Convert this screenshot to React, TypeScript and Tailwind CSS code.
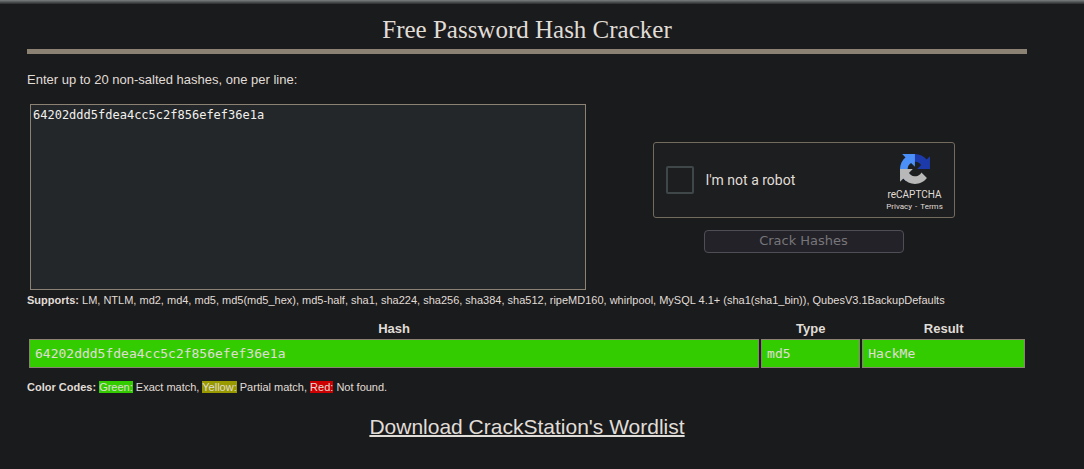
import { useState } from "react";

const SUPPORTED =
  "LM, NTLM, md2, md4, md5, md5(md5_hex), md5-half, sha1, sha224, sha256, sha384, sha512, ripeMD160, whirlpool, MySQL 4.1+ (sha1(sha1_bin)), QubesV3.1BackupDefaults";

const RESULTS = [
  { hash: "64202ddd5fdea4cc5c2f856efef36e1a", type: "md5", result: "HackMe" },
];

function RecaptchaLogo() {
  return (
    <svg viewBox="0 0 64 64" className="size-[30px]" aria-hidden="true">
      <path
        fill="#1c3aa9"
        d="M64 31.955l-.033-1.37V4.687l-7.16 7.16C50.948 4.674 42.033.093 32.05.093c-10.4 0-19.622 4.96-25.458 12.64l11.736 11.86a15.55 15.55 0 0 1 4.754-5.334c2.05-1.6 4.952-2.906 8.968-2.906.485 0 .86.057 1.135.163 4.976.393 9.288 3.14 11.828 7.124l-8.307 8.307L64 31.953"
      />
      <path
        fill="#4b8ff8"
        d="M31.862.094l-1.37.033H4.594l7.16 7.16C4.58 13.147 0 22.06 0 32.046c0 10.4 4.96 19.622 12.64 25.458L24.5 45.768a15.55 15.55 0 0 1-5.334-4.754c-1.6-2.05-2.906-4.952-2.906-8.968 0-.485.057-.86.163-1.135.393-4.976 3.14-9.288 7.124-11.828l8.307 8.307L31.86.095"
      />
      <path
        fill="#b8b8b8"
        d="M.001 32.045l.033 1.37v25.898l7.16-7.16c5.86 7.173 14.774 11.754 24.76 11.754 10.4 0 19.622-4.96 25.458-12.64l-11.736-11.86a15.55 15.55 0 0 1-4.754 5.334c-2.05 1.6-4.952 2.906-8.968 2.906-.485 0-.86-.057-1.135-.163-4.976-.393-9.288-3.14-11.828-7.124l8.307-8.307c-10.522.04-22.4.066-27.985-.005"
      />
    </svg>
  );
}

function Recaptcha() {
  return (
    <div className="flex h-[76px] w-[302px] items-center rounded-[3px] border border-[#736b5e] bg-[#1c1e1f] pl-3 font-['Roboto',sans-serif] text-[#e0ddd8]">
      <input
        id="robot"
        type="checkbox"
        className="size-7 appearance-none rounded-[2px] border-2 border-[#404748] checked:bg-[#3c0]"
      />
      <label htmlFor="robot" className="flex-1 pl-3 text-sm">
        I'm not a robot
      </label>
      <div className="flex w-[78px] flex-col items-center pt-[6px]">
        <RecaptchaLogo />
        <span className="mt-1 text-[10px] leading-[14px]">reCAPTCHA</span>
        <span className="flex gap-[3px] text-[8px] leading-[10px]">
          <a href="#privacy">Privacy</a>
          <span>-</span>
          <a href="#terms">Terms</a>
        </span>
      </div>
    </div>
  );
}

function ResultsTable() {
  return (
    <table className="w-full table-fixed border-separate border-spacing-x-[2px] border-spacing-y-0">
      <colgroup>
        <col className="w-[73.6%]" />
        <col className="w-[10%]" />
        <col />
      </colgroup>
      <thead className="leading-5">
        <tr>
          <th>Hash</th>
          <th>Type</th>
          <th>Result</th>
        </tr>
      </thead>
      <tbody className="font-['DejaVu_Sans_Mono',monospace] leading-[17px]">
        {RESULTS.map((row) => (
          <tr key={row.hash}>
            <td className="border border-[#8c8273] bg-[#3c0] px-[5px] py-[5px]">{row.hash}</td>
            <td className="border border-[#8c8273] bg-[#3c0] px-[5px] py-[5px]">{row.type}</td>
            <td className="border border-[#8c8273] bg-[#3c0] px-[5px] py-[5px]">{row.result}</td>
          </tr>
        ))}
      </tbody>
    </table>
  );
}

export default function App() {
  const [hashes, setHashes] = useState("64202ddd5fdea4cc5c2f856efef36e1a");

  return (
    <div className="min-h-screen bg-[#1a1b1c] font-['Liberation_Sans',sans-serif] text-[13px] text-[#e0ddd8]">
      <div className="h-1 bg-linear-to-b from-[#7c8080] to-[#2a2c2d]" />
      <main className="pr-[57px] pl-[27px]">
        <h1 className="border-b-5 border-[#8c8273] pt-[11px] pb-[4px] text-center font-['Liberation_Serif',serif] text-[25px] leading-[30px]">
          Free Password Hash Cracker
        </h1>

        <label htmlFor="hashes" className="block pt-4 leading-5">
          Enter up to 20 non-salted hashes, one per line:
        </label>

        <form className="flex pt-[14px] pl-[3px]" onSubmit={(e) => e.preventDefault()}>
          <textarea
            id="hashes"
            value={hashes}
            onChange={(e) => setHashes(e.target.value)}
            spellCheck={false}
            className="h-[186px] w-[556px] resize-none border border-[#8c8273] bg-[#232729] p-[2px] font-['DejaVu_Sans_Mono',monospace] text-xs leading-4 text-[#f2f0ed]"
          />
          <div className="flex flex-1 flex-col items-center justify-center gap-3 pr-[6px]">
            <Recaptcha />
            <button
              type="submit"
              disabled
              className="h-[23px] w-[200px] rounded-[4px] border border-[#4f4e56] bg-[#232228] font-['DejaVu_Sans',sans-serif] leading-5 text-[#77767a]"
            >
              Crack Hashes
            </button>
          </div>
        </form>

        <p className="pt-[2px] pb-[11px] text-[11px] leading-4">
          <strong>Supports:</strong> {SUPPORTED}
        </p>

        <ResultsTable />

        <p className="pt-[11px] text-[11px] leading-4">
          <strong>Color Codes:</strong> <span className="bg-[#3c0]">Green:</span> Exact match,{" "}
          <span className="bg-[#990]">Yellow:</span> Partial match,{" "}
          <span className="bg-[#c00]">Red:</span> Not found.
        </p>

        <p className="pt-[17px] text-center text-[21px] leading-[30px]">
          <a href="#wordlist" className="underline decoration-2">
            Download CrackStation's Wordlist
          </a>
        </p>
      </main>
    </div>
  );
}
